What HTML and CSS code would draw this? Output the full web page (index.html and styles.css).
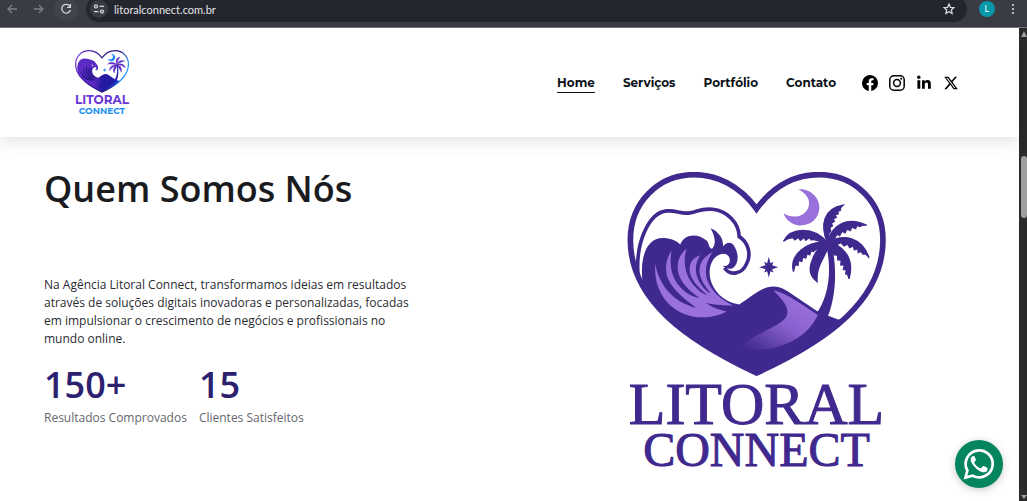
FILE: index.html
```html
<!DOCTYPE html>
<html lang="pt-BR">
<head>
  <meta charset="UTF-8" />
  <meta name="viewport" content="width=device-width, initial-scale=1.0" />
  <title>Litoral Connect</title>
  <link rel="stylesheet" href="styles.css">
</head>
<body>
  <!-- desenho da marca, usado no topo e na seção -->
  <svg class="defs" width="0" height="0" aria-hidden="true">
    <defs>
      <linearGradient id="duna" x1="0.9" y1="0" x2="0.1" y2="1">
        <stop offset="0" stop-color="#a074e0" />
        <stop offset="0.5" stop-color="#8a62cf" />
        <stop offset="1" stop-color="#40298e" />
      </linearGradient>
      <linearGradient id="aro" x1="0" y1="0" x2="1" y2="0.3">
        <stop offset="0" stop-color="#7a35dc" />
        <stop offset="0.5" stop-color="#2b1a8c" />
        <stop offset="0.8" stop-color="#2b1a8c" />
        <stop offset="1" stop-color="#1e90f5" />
      </linearGradient>
      <linearGradient id="mar" x1="0" y1="0" x2="1" y2="0">
        <stop offset="0" stop-color="#6a2fd0" />
        <stop offset="0.4" stop-color="#5526bd" />
        <stop offset="0.6" stop-color="#2318a0" />
        <stop offset="1" stop-color="#1c3cc8" />
      </linearGradient>
      <symbol id="coracao" viewBox="84 36 776 616">
        <path class="ink" d="M132 385C118 300 138 234 190 234C212 234 232 241 243 254C254 222 295 218 322 242C330 250 327 262 338 267C353 252 346 226 334 205C358 215 374 236 371 260C382 244 399 245 407 262C420 287 417 310 404 322C394 331 378 327 371 318C382 320 392 314 392 301C391 282 372 276 354 288C331 304 325 340 338 372C352 406 385 430 420 434C456 412 488 379 524 380C546 381 562 392 580 404L658 457L717 479L740 478C670 543 575 594 472 640C330 575 200 495 132 385Z" />
        <path class="crest" d="M132 385C95 270 130 165 200 160C235 156 270 162 300 170C350 175 385 215 407 262L371 260L322 242L243 254L190 234Z" />
        <path class="ink" d="M680 254L698 254C713 320 713 400 687 469L650 464C692 410 699 320 680 254Z" />
        <path class="line" d="M116 345C108 245 150 158 202 153C232 150 242 163 272 159C296 156 304 144 340 148C385 153 419 190 420 230C446 245 458 284 442 312C430 342 392 350 376 324" />
        <path class="rim" d="M472 147C420 75 350 44 285 44C175 44 93 130 93 240C93 420 260 540 472 640C690 540 852 420 852 240C852 130 770 44 660 44C590 44 525 75 472 147Z" />
        <path class="foam" d="M168 312C178 372 217 426 292 445C270 428 214 391 202 345C197 315 203 293 217 272C207 323 220 371 266 402C280 411 292 413 301 414C276 397 237 366 235 325C234 297 246 280 262 266C249 306 257 354 295 388C306 399 319 405 323 405C294 381 269 354 271 325C272 307 282 293 303 286C281 318 286 358 320 391C325 396 329 399 333 399C310 371 299 350 301 327C303 303 319 287 341 276C309 319 315 363 347 398C361 414 383 428 402 437C375 438 345 436 321 430C340 444 362 452 382 455C356 470 314 477 279 470C206 455 161 390 168 312Z" />
        <path class="dune" d="M524 392C553 396 603 429 656 466C630 522 575 557 510 567C480 572 451 573 427 571C427 545 475 527 515 505C551 486 571 474 563 445C557 423 535 407 524 392Z" />
        <path class="moon" d="M597 88C627 84 662 107 661 145C658 182 628 200 595 196C573 191 560 178 553 161C590 182 627 164 630 132C631 111 614 96 597 88Z" />
        <path class="star" d="M509 291L514 310L523 306L519 316L537 322L519 328L523 338L514 334L509 353L504 334L495 338L499 328L480 322L499 316L495 306L504 310Z" />
        <g class="ink palm">
          <path d="M684 247C664 195 672 147 732 136C724 143 722 149 724 151L715 155L718 161L707 166L712 172L702 177L706 184L697 190L700 198L692 203L695 213L689 222Z" />
          <path d="M684 247C701 193 745 169 803 196C794 194 787 196 783 200L773 197L770 206L758 202L754 212L744 207L738 219L729 214L722 227L714 223L705 238Z" />
          <path d="M684 247C738 220 790 233 810 294C804 284 797 280 792 283L786 274L778 278L776 266L766 270L763 258L752 263L746 252L735 258L726 248L714 254Z" />
          <path d="M684 247C728 253 769 292 750 357C748 346 745 342 740 342L742 330L733 329L736 316L725 315L727 301L716 300L716 286L705 285L703 271Z" />
          <path d="M684 247C692 285 650 304 654 366C634 350 628 326 640 300C646 280 660 260 684 247Z" />
          <path d="M684 247C672 269 653 262 643 275L636 272L632 285L624 281L620 295L611 291L608 305L598 302L597 316L588 315L583 335C570 285 624 242 684 247Z" />
          <path d="M684 247C655 248 648 234 636 240L631 233L620 241L615 233L604 241L598 233L587 240L582 234C571 233 563 237 553 244C575 201 645 199 684 247Z" />
        </g>
      </symbol>
    </defs>
  </svg>

  <div class="toolbar">
    <button class="tool" aria-label="Voltar">
      <svg width="12" height="12" viewBox="0 0 12 12"><path d="M11 6H2M6 2L2 6l4 4" /></svg>
    </button>
    <button class="tool" aria-label="Avançar">
      <svg width="12" height="12" viewBox="0 0 12 12"><path d="M1 6h9M6 2l4 4-4 4" /></svg>
    </button>
    <button class="tool reload" aria-label="Recarregar">
      <svg width="12" height="12" viewBox="0 0 12 12"><path d="M10 3.5A4.4 4.4 0 1 0 10.4 7M10.4 1v3.4H7" /></svg>
    </button>
    <div class="address">
      <button class="site-info" aria-label="Informações do site">
        <svg width="12" height="12" viewBox="0 0 12 12"><circle cx="3" cy="3.4" r="1.5" /><path d="M6.5 3.4H11M1 8.6h4.5" /><circle cx="9" cy="8.6" r="1.5" /></svg>
      </button>
      <input class="url" type="text" value="litoralconnect.com.br" aria-label="Endereço">
      <button class="favorite" aria-label="Favoritar">
        <svg width="12" height="12" viewBox="0 0 12 12"><path d="M6 1l1.4 3.3 3.6.3-2.7 2.4.8 3.5L6 8.7l-3.1 1.8.8-3.5L1 4.600l3.600-.3z" /></svg>
      </button>
    </div>
    <button class="profile">L</button>
    <button class="menu" aria-label="Menu">
      <svg width="4" height="12" viewBox="0 0 4 12"><circle cx="2" cy="2" r="1.1" /><circle cx="2" cy="6" r="1.1" /><circle cx="2" cy="10" r="1.1" /></svg>
    </button>
  </div>

  <div class="window">
    <div class="page">
      <header class="header">
        <a class="brand" href="#">
          <svg class="brand-heart" aria-hidden="true"><use href="#coracao" /></svg>
          <span class="brand-top">LITORAL</span>
          <span class="brand-bottom">CONNECT</span>
        </a>
        <nav class="nav">
          <a class="active" href="#">Home</a>
          <a href="#">Serviços</a>
          <a href="#">Portfólio</a>
          <a href="#">Contato</a>
        </nav>
        <div class="social">
          <a href="#" aria-label="Facebook">
            <svg width="16" height="16" viewBox="0 0 16 16"><path d="M16 8.050A8 8 0 1 0 6.750 15.950V10.350H4.720V8.050H6.750V6.280C6.750 4.270 7.940 3.160 9.770 3.160C10.650 3.160 11.560 3.320 11.560 3.320V5.290H10.550C9.560 5.290 9.250 5.910 9.250 6.540V8.050H11.470L11.110 10.350H9.250V15.950A8 8 0 0 0 16 8.050Z" /></svg>
          </a>
          <a href="#" aria-label="Instagram">
            <svg class="outline" width="16" height="16" viewBox="0 0 16 16"><rect x="0.8" y="0.8" width="14.4" height="14.4" rx="4" /><circle cx="8" cy="8" r="3.400" /><circle class="dot" cx="12.200" cy="3.800" r="1" /></svg>
          </a>
          <a href="#" aria-label="LinkedIn">
            <svg width="16" height="16" viewBox="0 0 16 16"><circle cx="2.800" cy="2.300" r="1.700" /><path d="M1.400 5.300h2.900v8.400H1.400zM6 5.300h2.700V6.500c.5-.9 1.500-1.500 2.800-1.500 2.500 0 3.300 1.600 3.300 4v4.700H12V9.500c0-1.200-.3-2.100-1.500-2.100S8.800 8.300 8.800 9.500v4.200H6z" /></svg>
          </a>
          <a href="#" aria-label="X">
            <svg width="16" height="16" viewBox="0 0 16 16"><path fill-rule="evenodd" d="M12 1.800h2.100L9.500 7l5.300 7.200h-4.200L7.300 9.800l-3.800 4.400H1.300l4.900-5.600L1.200 1.800h4.300l3 4zM11.300 12.900h1.100L4.800 3H3.500z" /></svg>
          </a>
        </div>
      </header>

      <main class="about">
        <section class="text">
          <h1>Quem Somos Nós</h1>
          <p class="intro">Na Agência Litoral Connect, transformamos ideias em resultados através de soluções digitais inovadoras e personalizadas, focadas em impulsionar o crescimento de negócios e profissionais no mundo online.</p>
          <div class="stats">
            <div>
              <strong>150+</strong>
              <span>Resultados Comprovados</span>
            </div>
            <div>
              <strong>15</strong>
              <span>Clientes Satisfeitos</span>
            </div>
          </div>
        </section>
        <div class="logo">
          <svg class="logo-heart" aria-hidden="true"><use href="#coracao" /></svg>
          <span class="logo-top">LITORAL</span>
          <span class="logo-bottom">CONNECT</span>
        </div>
      </main>

      <a class="whatsapp" href="#" aria-label="WhatsApp">
        <svg width="32" height="32" viewBox="0 0 32 32">
          <path class="bubble" d="M2.500 29.500l1.900-7A13.500 13.500 0 1 1 9.500 27.600z" />
          <path class="phone" d="M11.700 8.700c-.4-.8-.8-.8-1.200-.8-1.200 0-2.800 1.300-2.800 3.700 0 2.300 1.700 4.600 2 4.900.3.400 3.500 5.400 8.500 7.200 4.200 1.500 6-.4 6.300-2 .3-1.400.1-1.700-.3-1.900l-3.500-1.700c-.5-.2-.8-.1-1.100.3l-1.300 1.600c-.3.300-.6.400-1 .2-3-1.300-4.700-3-6-5.300-.2-.4-.1-.7.200-1l1.300-1.600c.2-.3.200-.6.100-.9z" />
        </svg>
      </a>
    </div>
    <div class="scrollbar">
      <span class="arrow up"></span>
      <span class="thumb"></span>
      <span class="arrow down"></span>
    </div>
  </div>
</body>
</html>
```

FILE: styles.css
```css
* {
  box-sizing: border-box;
}

body {
  margin: 0;
  min-height: 100vh;
  display: flex;
  flex-direction: column;
  font-family: "Open Sans", "Liberation Sans", sans-serif;
  background-color: white;
}

a {
  color: inherit;
  text-decoration: none;
}

button {
  padding: 0;
  border: none;
  background: none;
  cursor: pointer;
  display: flex;
  align-items: center;
  justify-content: center;
}

svg {
  display: block;
}

.defs {
  position: absolute;
}

/* barra do navegador */
.toolbar {
  height: 28px;
  padding: 0 12px 9px 0;
  display: flex;
  align-items: center;
  gap: 3px;
  background-color: #3a3c44;
  border-bottom: 1px solid #777980;
}

.toolbar svg {
  fill: none;
  stroke: #d4d6da;
  stroke-width: 1.3;
}

.tool {
  width: 24px;
  height: 24px;
  border-radius: 50%;
}

.tool svg {
  stroke: #7d7f86;
}

.tool.reload {
  background-color: #42444b;
}

.tool.reload svg {
  stroke: #d4d6da;
}

.address {
  flex: 1;
  height: 26px;
  margin-left: 5px;
  padding: 0 12px 0 4px;
  display: flex;
  align-items: center;
  gap: 6px;
  border-radius: 13px;
  background-color: #23262e;
}

.site-info {
  width: 18px;
  height: 18px;
  border-radius: 50%;
  background-color: #3a3c44;
}

.url {
  flex: 1;
  padding: 0;
  border: none;
  outline: none;
  background: none;
  color: #e4e5e8;
  font-family: Lato, sans-serif;
  font-size: 11px;
}

.profile {
  width: 16px;
  height: 16px;
  margin: 0 13px 0 9px;
  border-radius: 50%;
  background-color: #0797a8;
  color: white;
  font-family: Roboto, sans-serif;
  font-size: 9px;
}

.toolbar .menu svg {
  fill: #d4d6da;
  stroke: none;
}

/* janela + barra de rolagem */
.window {
  flex: 1;
  display: flex;
}

.page {
  position: relative;
  flex: 1;
}

.scrollbar {
  width: 8px;
  padding: 3px 0 2px 2px;
  display: flex;
  flex-direction: column;
  background-color: #2b2b2b;
}

.thumb {
  height: 62px;
  margin: 119px 0 auto;
  border-radius: 3px;
  background-color: #9f9f9f;
}

.arrow {
  border-left: 3px solid transparent;
  border-right: 3px solid transparent;
}

.arrow.up {
  border-bottom: 6px solid #9f9f9f;
}

.arrow.down {
  border-top: 4px solid #9f9f9f;
}

/* topo do site */
.header {
  min-height: 109px;
  padding: 0 60px 0 75px;
  display: flex;
  align-items: center;
  background-color: white;
  box-shadow: 0 4px 16px rgba(0, 0, 0, 0.12);
}

.brand {
  margin-right: auto;
  display: flex;
  flex-direction: column;
  align-items: center;
  font-family: Montserrat, Lato, sans-serif;
  font-weight: 700;
  --ink: url(#mar);
  --crest: #5a2bc4;
  --line: none;
  --rim: url(#aro);
  --palm: #5a2bc4;
  --foam: #2a188f;
  --dune: #2318a0;
  --moon: #1e90f5;
  --star: #1e90f5;
}

.brand-heart {
  width: 54px;
  height: 43px;
}

.brand-top {
  font-size: 12px;
  line-height: 13px;
  color: #6a35d6;
}

.brand-bottom {
  font-size: 9px;
  line-height: 9px;
  color: #1e90f5;
}

.nav {
  display: flex;
  gap: 28px;
  margin-right: 26px;
  font-family: Montserrat, Inter, sans-serif;
  font-size: 12px;
  font-weight: 700;
  line-height: 18px;
  color: #0d1218;
}

.nav a {
  padding-top: 2px;
  border-bottom: 1px solid transparent;
}

.nav .active {
  border-bottom-color: #0d1218;
}

.social {
  display: flex;
  gap: 11px;
}

.outline {
  fill: none;
  stroke: black;
  stroke-width: 1.5;
}

.outline .dot {
  fill: black;
  stroke: none;
}

/* quem somos */
.about {
  padding: 28px 42px 16px 44px;
  display: grid;
  grid-template-columns: 1fr 1fr;
  gap: 51px;
}

h1 {
  margin: 0 0 63px;
  font-size: 36px;
  font-weight: 600;
  line-height: 48px;
  color: #1a1b1e;
}

.intro {
  max-width: 380px;
  margin: 0 0 13px;
  font-size: 12px;
  line-height: 18px;
  color: #2a2c31;
}

.stats {
  display: flex;
  gap: 12px;
}

.stats div {
  display: flex;
  flex-direction: column;
}

.stats strong {
  font-size: 36px;
  font-weight: 600;
  line-height: 48px;
  color: #2c216f;
}

.stats span {
  font-size: 12px;
  line-height: 18px;
  color: #65676c;
}

.logo {
  padding-top: 7px;
  display: flex;
  flex-direction: column;
  align-items: center;
  font-family: "Liberation Serif", serif;
  color: #40298e;
  -webkit-text-stroke: 1px #40298e;
  --ink: #40298e;
  --crest: none;
  --line: #40298e;
  --rim: #40298e;
  --palm: #40298e;
  --foam: #9a70dc;
  --dune: url(#duna);
  --moon: #9a70dc;
  --star: #40298e;
}

.logo-heart {
  width: 259px;
  height: 205px;
}

.logo-top {
  font-size: 60px;
  line-height: 54px;
}

.logo-bottom {
  font-size: 48px;
  line-height: 38px;
}

.ink {
  fill: var(--ink);
}

.palm {
  fill: var(--palm);
  stroke: var(--palm);
  stroke-width: 4;
}

.crest {
  fill: var(--crest);
}

.line {
  fill: none;
  stroke: var(--line);
  stroke-width: 11;
}

.rim {
  fill: none;
  stroke: var(--rim);
  stroke-width: 17;
}

.foam {
  fill: var(--foam);
}

.dune {
  fill: var(--dune);
}

.moon {
  fill: var(--moon);
}

.star {
  fill: var(--star);
}

.whatsapp {
  position: absolute;
  right: 16px;
  bottom: 13px;
  width: 48px;
  height: 48px;
  display: flex;
  align-items: center;
  justify-content: center;
  border-radius: 50%;
  background-color: #04845f;
  box-shadow: 0 2px 8px rgba(0, 0, 0, 0.2);
}

.bubble {
  fill: none;
  stroke: white;
  stroke-width: 2.7;
}

.phone {
  fill: white;
}
```
